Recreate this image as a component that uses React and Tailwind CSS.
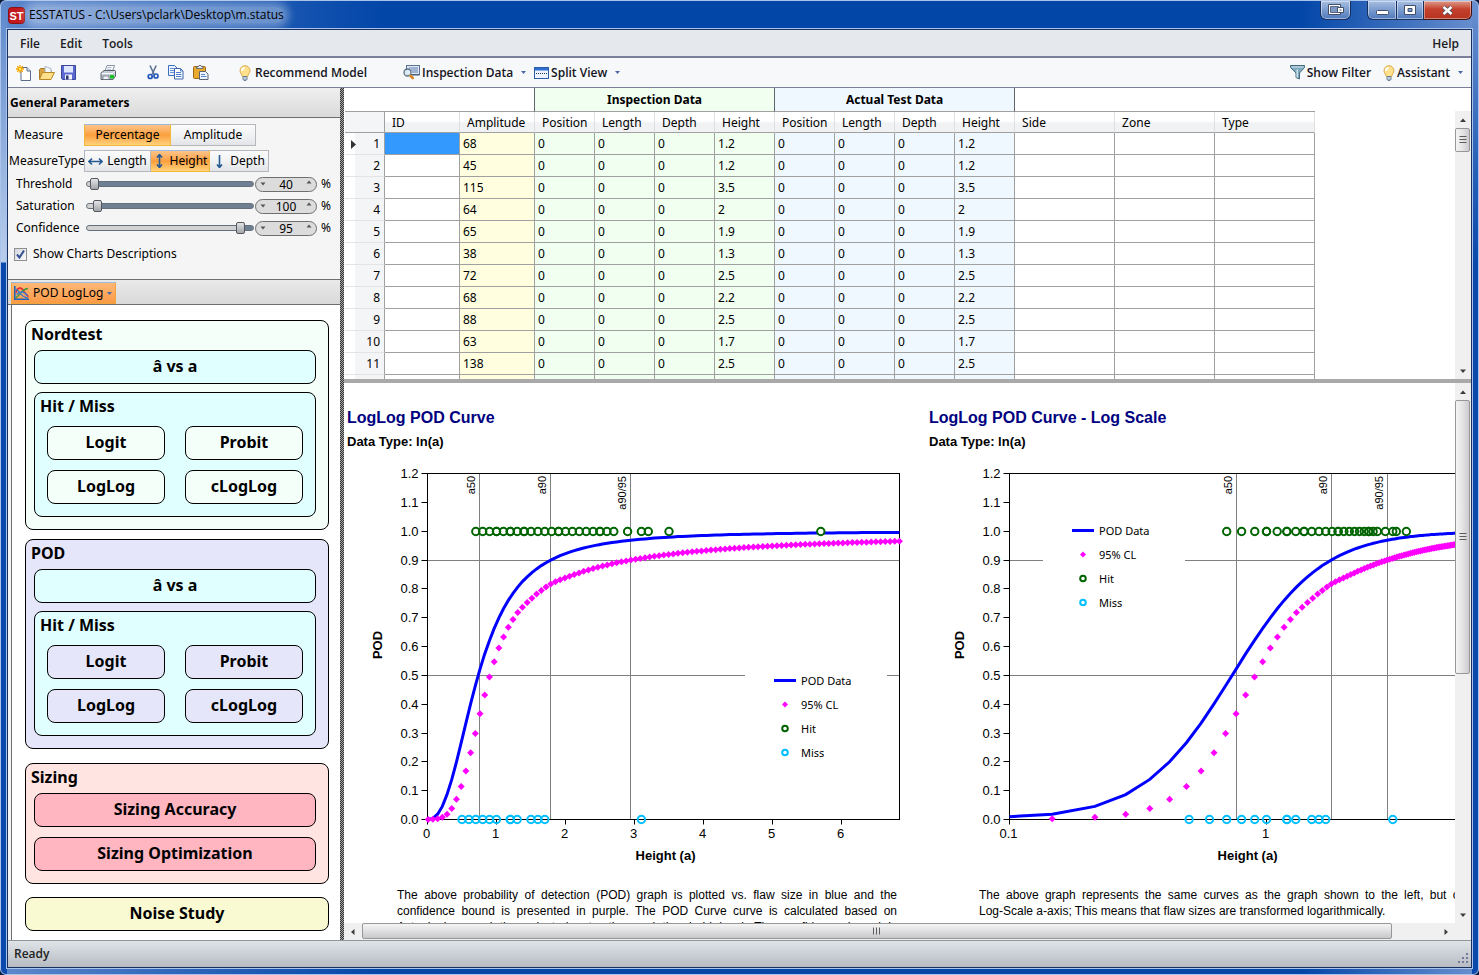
import { useState } from 'react';
import { twMerge } from 'tailwind-merge';

const ROWS = [
  ['68', '1.2'], ['45', '1.2'], ['115', '3.5'], ['64', '2'], ['65', '1.9'], ['38', '1.3'],
  ['72', '2.5'], ['68', '2.2'], ['88', '2.5'], ['63', '1.7'], ['138', '2.5'],
];

const COLUMNS = [
  'ID', 'Amplitude', 'Position', 'Length', 'Depth', 'Height',
  'Position', 'Length', 'Depth', 'Height', 'Side', 'Zone', 'Type',
];

const HITS = [
  0.7, 0.8, 0.9, 1, 1, 1.1, 1.2, 1.2, 1.3, 1.4, 1.4, 1.5, 1.6, 1.7, 1.8, 1.9, 1.9, 2, 2.1, 2.2,
  2.3, 2.4, 2.5, 2.5, 2.6, 2.7, 2.9, 3.1, 3.2, 3.5, 5.7,
];
const MISSES = [0.5, 0.6, 0.7, 0.8, 0.9, 1, 1.2, 1.2, 1.3, 1.5, 1.6, 1.7, 3.1];

// lower 95% bound, [step index, probability]
const BOUND = [
  [0, 0.0001], [1, 0.001], [2, 0.003], [3, 0.008], [4, 0.0185], [5, 0.038], [6, 0.0705], [7, 0.1146], [9, 0.2316],
  [11, 0.367], [13, 0.494], [15, 0.595], [17, 0.667], [19, 0.7177], [26, 0.817], [31, 0.8497],
  [43, 0.9], [58, 0.9316], [73, 0.949], [100, 0.9653],
];

const sizes = [...Array(101)].map((_, i) => 0.01 + i * 0.0683);
const pod = (a) => 1 / (1 + Math.pow(0.735 / a, 2.473));

function bound(i) {
  const k = Math.max(1, BOUND.findIndex(([n]) => n >= i));
  const [n0, p0] = BOUND[k - 1];
  const [n1, p1] = BOUND[k];
  const t = (Math.log(i + 0.15) - Math.log(n0 + 0.15)) / (Math.log(n1 + 0.15) - Math.log(n0 + 0.15));
  const l0 = Math.log(p0 / (1 - p0));
  const l1 = Math.log(p1 / (1 - p1));
  return 1 / (1 + Math.exp(-(l0 + (l1 - l0) * t)));
}

/* ---------- icons ---------- */

function NewIcon() {
  return (
    <svg width="16" height="16" viewBox="0 0 16 16">
      <path d="M5 2.5h6l3.5 3.5v9.5H5z" fill="#fff" stroke="#5b6b8c" />
      <path d="M11 2.5V6h3.500" fill="#dfe6f2" stroke="#5b6b8c" />
      <path d="M4 0v8M0 4h8M1.200 1.200l5.600 5.600M6.800 1.200L1.200 6.800" stroke="#f0a400" strokeWidth="1.300" />
      <circle cx="4" cy="4" r="1.700" fill="#ffe64a" stroke="#f5a800" strokeWidth="0.800" />
    </svg>
  );
}

function OpenIcon() {
  return (
    <svg width="17" height="16" viewBox="0 0 17 16">
      <path d="M1.500 14V4.500l1-1h4l1.500 1.500h5V14z" fill="#d9a441" stroke="#a87a25" />
      <path d="M7 8V1.500l6 2V8z" fill="#f4f7fb" stroke="#9aa7bb" strokeWidth="0.800" />
      <path d="M1.500 14.500L4.500 7.500h12l-3.500 7z" fill="#ffe08a" stroke="#b98728" />
    </svg>
  );
}

function SaveIcon() {
  return (
    <svg width="15" height="15" viewBox="0 0 15 15">
      <path d="M0.500 0.500h14v14h-13l-1-1z" fill="#5a68d0" stroke="#3a459e" />
      <rect x="3" y="1" width="9" height="6.500" fill="#dfe7fb" />
      <rect x="4" y="9.500" width="7" height="5" fill="#f2f4fa" />
      <rect x="5" y="10.500" width="2.500" height="4" fill="#2b3270" />
    </svg>
  );
}

function PrintIcon() {
  return (
    <svg width="17" height="16" viewBox="0 0 17 16">
      <path d="M5 6l2-5.500h7.500L12.500 6z" fill="#fff" stroke="#7d8796" strokeWidth="0.900" />
      <path d="M7.500 2.500h4M7 4.300h4" stroke="#8fa0bd" strokeWidth="0.700" />
      <path d="M1 8l3-2.500h11.500V11l-2.500 3.500H1z" fill="#c5ccd6" stroke="#59626f" />
      <path d="M1.500 8.500h11.500l2.500-3" fill="none" stroke="#f7f9fb" />
      <rect x="3" y="11" width="6" height="3.500" fill="#eef1f5" stroke="#59626f" strokeWidth="0.700" />
      <rect x="10" y="10" width="4" height="3.500" fill="#19c422" />
    </svg>
  );
}

function CutIcon() {
  return (
    <svg width="12" height="15" viewBox="0 0 12 15">
      <path d="M3 0.500l4.200 9M9.200 0.500L5 9.500" stroke="#5f7394" strokeWidth="1.600" />
      <circle cx="3.200" cy="11.500" r="2" fill="none" stroke="#2458b8" strokeWidth="1.700" />
      <circle cx="9" cy="11" r="2" fill="none" stroke="#2458b8" strokeWidth="1.700" />
    </svg>
  );
}

function CopyIcon() {
  return (
    <svg width="16" height="15" viewBox="0 0 16 15">
      <path d="M0.500 0.500h6l2.500 2.500v7.500H0.500z" fill="#eaf2ff" stroke="#3b6fbf" />
      <path d="M2 3.500h4M2 5.500h4M2 7.500h4" stroke="#6a94d6" />
      <path d="M6.500 3.500h6l2.500 2.500v8H6.500z" fill="#fff" stroke="#3b62b0" />
      <path d="M12.500 3.500V6H15M8 7.500h5M8 9.500h5.500M8 11.500h5.500" fill="none" stroke="#4c7dcc" />
    </svg>
  );
}

function PasteIcon() {
  return (
    <svg width="16" height="15" viewBox="0 0 16 15">
      <rect x="0.500" y="1.500" width="12" height="12" rx="1" fill="#e8a92c" stroke="#9a6a18" />
      <path d="M3.500 3.500V2h1.500L6 0.500h2L9 2h1v1.500z" fill="#e9edf3" stroke="#5d6675" strokeWidth="0.900" />
      <path d="M6.500 6.500h6l2.500 2.500v5.500H6.500z" fill="#eef4ff" stroke="#5a6373" />
      <path d="M8 9.500h4M8 11.500h5.500" stroke="#5a86cc" />
    </svg>
  );
}

function BulbIcon() {
  return (
    <svg width="12" height="16" viewBox="0 0 12 16">
      <path d="M6 0.700a5 5 0 0 0-5 5c0 2.500 2 3.500 2.500 6h5C9 9.200 11 8.200 11 5.700a5 5 0 0 0-5-5z" fill="#ffe08c" stroke="#d9a33c" strokeWidth="0.900" />
      <path d="M4.500 2a3.600 3.600 0 0 0-2.300 4.500c1.500-.4 3.500-2 3.800-4.500z" fill="#fffdf0" />
      <path d="M4 11.500h4v3l-1 1H5l-1-1z" fill="#9db4c6" stroke="#54708a" strokeWidth="0.800" />
      <path d="M4 13h4" stroke="#e4eef5" strokeWidth="0.700" />
    </svg>
  );
}

function InspectIcon() {
  return (
    <svg width="17" height="15" viewBox="0 0 17 15">
      <rect x="3.500" y="0.500" width="13" height="9" fill="#dfe8f5" stroke="#5d7292" />
      <path d="M6 3h9M8 5h7M9 7h6" stroke="#5f7fae" />
      <path d="M3.500 10h13" stroke="#3f5578" />
      <circle cx="4.500" cy="7.500" r="3.500" fill="#dff0fb" fillOpacity="0.900" stroke="#5b7184" strokeWidth="1.300" />
      <path d="M7.500 10.700l2.200 2.200" stroke="#d8892b" strokeWidth="2.800" strokeLinecap="round" />
    </svg>
  );
}

function SplitIcon() {
  return (
    <svg width="15" height="12" viewBox="0 0 15 12">
      <rect x="0.500" y="0.500" width="14" height="11" fill="#eef4ff" stroke="#2e5da8" />
      <rect x="1" y="1" width="13" height="2.500" fill="#2f6fd0" />
      <path d="M2 6.500h11" stroke="#24365e" strokeDasharray="1 1" />
    </svg>
  );
}

function FilterIcon() {
  return (
    <svg width="15" height="15" viewBox="0 0 15 15">
      <path d="M0.500 0.500h14v2L9.500 8v6l-3.500-1.500V8L0.500 2.500z" fill="#7fa9bd" stroke="#44697c" />
      <path d="M1.500 2h12" stroke="#c9dfe9" strokeWidth="1.200" />
      <path d="M7.200 4.500v8" stroke="#dcecf3" strokeWidth="1.300" />
    </svg>
  );
}

function CurvesIcon() {
  return (
    <svg width="15" height="14" viewBox="0 0 15 14">
      <path d="M0.800 0v13.200H15" fill="none" stroke="#2464b4" strokeWidth="1.600" />
      <path d="M2 6.500C4 1 7 1 9 4s3.500 6 5.500 6.500" fill="none" stroke="#e0262a" strokeWidth="1.500" />
      <path d="M2 11.500C5 11 7 3 14 2.500" fill="none" stroke="#2e9a3f" strokeWidth="1.400" />
      <path d="M2 3c3 2 5 8.500 12 9M2.500 8.500c4-4 8-3 11 1" fill="none" stroke="#3a7bd0" strokeWidth="1.400" />
    </svg>
  );
}

function Arrow({ dir }) {
  const paths = {
    both: 'M1 5.500h13M4 2.500L1 5.500l3 3M11 2.500l3 3-3 3',
    updown: 'M7.500 1v12M5 3.500l2.500-3 2.500 3M5 10.500l2.500 3 2.500-3',
    down: 'M7.500 1v12M5 10.500l2.500 3 2.500-3',
  };
  const tall = dir !== 'both';
  return (
    <svg width={tall ? 13 : 15} height={tall ? 14 : 11} viewBox={tall ? '1 0 13 14' : '0 0 15 11'}>
      <path d={paths[dir]} fill="none" stroke="#245a92" strokeWidth="1.600" />
    </svg>
  );
}

function Caret({ className }) {
  return (
    <svg width="5" height="3" viewBox="0 0 5 3" className={className}>
      <path d="M0 0h5L2.500 3z" fill="#4c68a8" />
    </svg>
  );
}

/* ---------- window frame ---------- */

function TitleBar() {
  const button = 'flex h-full items-center justify-center border border-t-0 border-[#16305f] bg-linear-to-b from-[#a9bfe0] via-[#7f9fd0] via-45% to-[#4f79bd] shadow-[inset_0_0_0_1px_rgba(255,255,255,0.45)]';
  return (
    <header className="flex h-7 shrink-0 items-start">
      <div className="flex h-full flex-1 items-center gap-1 pl-px">
        <svg width="17" height="17" viewBox="0 0 17 17">
          <rect x="0.500" y="0.500" width="16" height="16" rx="3" fill="#c2181c" stroke="#8c1013" />
          <text x="8.500" y="13" textAnchor="middle" fontFamily="Liberation Sans, sans-serif" fontWeight="700" fontSize="11" fill="#fff">ST</text>
        </svg>
        <h1 className="rounded-full bg-white/35 text-[12px] leading-4 text-black shadow-[0_0_8px_5px_rgba(255,255,255,0.35)]">
          ESSTATUS - C:\Users\pclark\Desktop\m.status
        </h1>
      </div>
      <div className="mr-4 flex h-[19px]">
        <button type="button" aria-label="Dock window" className={twMerge(button, 'w-[31px] rounded-b-md')}>
          <svg width="16" height="12" viewBox="0 0 16 12">
            <path d="M0.500 0.500h12v10H0.500z" fill="#fff" stroke="#414f6b" />
            <path d="M2.500 2.500h8v6h-8z" fill="#7d97c4" stroke="#414f6b" strokeWidth="0.800" />
            <path d="M9.500 3.500h6v5h-6z" fill="#fff" stroke="#414f6b" />
            <path d="M11.500 5.500h2v1h-2z" fill="#414f6b" />
          </svg>
        </button>
      </div>
      <div className="flex h-[19px]">
        <button type="button" aria-label="Minimize" className={twMerge(button, 'w-[30px] rounded-bl-md')}>
          <svg width="13" height="5" viewBox="0 0 13 5" className="mt-1"><rect x="0.500" y="0.500" width="12" height="4" rx="1" fill="#fff" stroke="#414f6b" /></svg>
        </button>
        <button type="button" aria-label="Maximize" className={twMerge(button, 'w-[27px] border-l-0')}>
          <svg width="12" height="10" viewBox="0 0 12 10">
            <path fillRule="evenodd" d="M0.500 0.500h11v9H0.500zM4 3.500v3h4v-3z" fill="#fff" stroke="#414f6b" />
          </svg>
        </button>
        <button type="button" aria-label="Close" className="flex h-full w-[48px] items-center justify-center rounded-br-md border border-t-0 border-l-0 border-[#3f1414] bg-linear-to-b from-[#dc9a8c] via-[#c4402c] via-45% to-[#b5341f] shadow-[inset_0_0_0_1px_rgba(255,255,255,0.4)]">
          <svg width="13" height="11" viewBox="0 0 13 11">
            <path d="M2.500 2l8 7M10.500 2l-8 7" stroke="#4d5267" strokeWidth="4" />
            <path d="M2.500 2l8 7M10.500 2l-8 7" stroke="#fff" strokeWidth="2.400" />
          </svg>
        </button>
      </div>
    </header>
  );
}

function MenuBar() {
  return (
    <nav className="flex h-7 shrink-0 items-center gap-5 border-b-2 border-[#7b7f9a] bg-[#e5e9ee] px-3 pt-0.5 text-[12px] font-semibold text-[#1b1b22]">
      <button type="button">File</button>
      <button type="button">Edit</button>
      <button type="button">Tools</button>
      <button type="button" className="ml-auto">Help</button>
    </nav>
  );
}

function ToolButton({ icon, children, caret, label, className }) {
  return (
    <button type="button" aria-label={label} className={twMerge('flex items-center gap-0.5 whitespace-nowrap', className)}>
      {icon}
      {children && <span>{children}</span>}
      {caret && <Caret className="ml-1.5" />}
    </button>
  );
}

function Toolbar() {
  return (
    <div className="flex h-[30px] shrink-0 items-center justify-between border-b border-[#7b7f9a] bg-[#f6f8fa] pr-2 pl-2 text-[12px] font-semibold text-[#15151c]">
      <div className="flex items-center">
        <div className="flex items-center gap-1.5">
          <ToolButton label="New" icon={<NewIcon />} />
          <ToolButton label="Open" icon={<OpenIcon />} />
          <ToolButton label="Save" icon={<SaveIcon />} />
        </div>
        <div className="ml-6"><ToolButton label="Print" icon={<PrintIcon />} /></div>
        <div className="ml-[30px] flex items-center gap-[9px]">
          <ToolButton label="Cut" icon={<CutIcon />} />
          <ToolButton label="Copy" icon={<CopyIcon />} />
          <ToolButton label="Paste" icon={<PasteIcon />} />
        </div>
        <div className="ml-[30px]"><ToolButton icon={<BulbIcon />} className="gap-1">Recommend Model</ToolButton></div>
        <div className="ml-9 flex items-center gap-2">
          <ToolButton caret icon={<InspectIcon />}>Inspection Data</ToolButton>
          <ToolButton caret icon={<SplitIcon />}>Split View</ToolButton>
        </div>
      </div>
      <div className="flex items-center gap-3">
        <ToolButton icon={<FilterIcon />}>Show Filter</ToolButton>
        <ToolButton caret icon={<BulbIcon />}>Assistant</ToolButton>
      </div>
    </div>
  );
}

/* ---------- left side ---------- */

function Segment({ active, className, children, onClick }) {
  return (
    <button
      type="button"
      onClick={onClick}
      className={twMerge(
        'flex h-[22px] items-center justify-center gap-1 border border-l-0 border-[#b4b8bd] bg-linear-to-b from-[#fbfbfc] via-[#f1f2f4] via-50% to-[#e2e4e7]',
        active && 'border-[#f0b93a] border-t-[#9db9dc] bg-linear-to-b from-[#fdc48a] via-[#fb9f3c] via-50% to-[#ffd27c]',
        className,
      )}
    >
      {children}
    </button>
  );
}

function SliderRow({ label, initial, max }) {
  const [value, setValue] = useState(initial);
  const fill = 3 + (value / max) * 94;
  return (
    <div className="flex h-[22px] items-center">
      <label htmlFor={label} className="w-[70px]">{label}</label>
      <input
        id={label}
        type="range"
        min="0"
        max={max}
        value={value}
        onChange={(e) => setValue(Number(e.target.value))}
        className="h-1.5 w-[168px] appearance-none rounded-full border border-[#66707c] [&::-webkit-slider-thumb]:h-3 [&::-webkit-slider-thumb]:w-[9px] [&::-webkit-slider-thumb]:appearance-none [&::-webkit-slider-thumb]:rounded-[2px] [&::-webkit-slider-thumb]:border [&::-webkit-slider-thumb]:border-[#55595f] [&::-webkit-slider-thumb]:bg-linear-to-b [&::-webkit-slider-thumb]:from-[#e3e4e6] [&::-webkit-slider-thumb]:to-[#a3a6ab]"
        style={{ background: `linear-gradient(to right, #d2d2d2 ${fill}%, #6f8092 ${fill}%)` }}
      />
      <div className="ml-px flex h-[15px] w-[62px] items-center rounded-full border border-[#6f6f6f] bg-[#dcdcdc] px-1">
        <button type="button" aria-label={`Decrease ${label}`} onClick={() => setValue(value - 1)}>
          <svg width="6" height="4" viewBox="0 0 6 4"><path d="M0.500 0.500h5L3 3.500z" fill="#555" /></svg>
        </button>
        <input
          aria-label={`${label} value`}
          value={value}
          onChange={(e) => setValue(Number(e.target.value) || 0)}
          className="w-0 flex-1 bg-transparent text-center leading-3 outline-none"
        />
        <button type="button" aria-label={`Increase ${label}`} onClick={() => setValue(value + 1)}>
          <svg width="6" height="4" viewBox="0 0 6 4" className="mb-1"><path d="M0.500 3.500h5L3 0.500z" fill="#555" /></svg>
        </button>
      </div>
      <span className="ml-1">%</span>
    </div>
  );
}

function Parameters() {
  const [measure, setMeasure] = useState('Percentage');
  const [type, setType] = useState('Height');
  const [descriptions, setDescriptions] = useState(true);
  return (
    <>
      <h2 className="flex h-[30px] shrink-0 items-center border-b border-[#6e6e6e] bg-linear-to-b from-[#efefef] to-[#dadada] pl-0.5 text-[12px] font-bold">
        General Parameters
      </h2>
      <div className="h-[162px] shrink-0 border-b border-[#6e6e6e] bg-[#f5f5f5] pt-1.5 text-[12px]">
        <div className="flex items-center">
          <span className="w-[76px] pl-1.5">Measure</span>
          <Segment className="w-[87px] border-l" active={measure === 'Percentage'} onClick={() => setMeasure('Percentage')}>Percentage</Segment>
          <Segment className="w-[85px]" active={measure === 'Amplitude'} onClick={() => setMeasure('Amplitude')}>Amplitude</Segment>
        </div>
        <div className="mt-1 flex items-center">
          <span className="w-[76px] pl-px whitespace-nowrap">MeasureType</span>
          <Segment className="w-[67px] border-l" active={type === 'Length'} onClick={() => setType('Length')}><Arrow dir="both" />Length</Segment>
          <Segment className="w-[59px]" active={type === 'Height'} onClick={() => setType('Height')}><Arrow dir="updown" />Height</Segment>
          <Segment className="w-[59px]" active={type === 'Depth'} onClick={() => setType('Depth')}><Arrow dir="down" />Depth</Segment>
        </div>
        <div className="mt-px pl-2">
          <SliderRow label="Threshold" initial={40} max={2500} />
          <SliderRow label="Saturation" initial={100} max={2500} />
          <SliderRow label="Confidence" initial={95} max={100} />
        </div>
        <label className="mt-1.5 flex items-center gap-1.5 pl-1.5">
          <input
            type="checkbox"
            checked={descriptions}
            onChange={(e) => setDescriptions(e.target.checked)}
            className="peer sr-only"
          />
          <span className="flex size-[13px] items-center justify-center border border-[#8e8f8f] bg-linear-to-br from-[#d3d8e0] to-[#fafbfc]">
            {descriptions && (
              <svg width="9" height="9" viewBox="0 0 9 9"><path d="M1 4.500l2.500 3L8 0.500" fill="none" stroke="#34508f" strokeWidth="2" /></svg>
            )}
          </span>
          Show Charts Descriptions
        </label>
      </div>
    </>
  );
}

function ModelButton({ className, children }) {
  return (
    <button type="button" className={twMerge('h-[34px] w-full rounded-lg border border-black pb-0.5', className)}>
      {children}
    </button>
  );
}

function ModelGroup({ title, tone, buttonTone }) {
  return (
    <section className={twMerge('rounded-lg border border-black px-2 pb-3', tone)}>
      <h3 className="-ml-1 flex h-[29px] items-center pb-1 pl-px">{title}</h3>
      <div className="pr-1">
        <ModelButton className="bg-[#e0ffff]">â vs a</ModelButton>
        <div className="mt-2 rounded-lg border border-black bg-[#e0ffff] px-3 pb-3">
          <h4 className="-ml-2 flex h-[33px] items-center pb-2 pl-px">Hit / Miss</h4>
          <div className="grid grid-cols-2 gap-x-5 gap-y-2.5">
            {['Logit', 'Probit', 'LogLog', 'cLogLog'].map((name) => (
              <ModelButton key={name} className={buttonTone}>{name}</ModelButton>
            ))}
          </div>
        </div>
      </div>
    </section>
  );
}

function Sidebar() {
  return (
    <aside className="flex w-[332px] shrink-0 flex-col bg-[#f5f5f5] text-black">
      <Parameters />
      <div className="flex h-[25px] shrink-0 items-end border-b border-[#6e6e6e] bg-linear-to-b from-[#e9e9e9] to-[#d9d9d9] pl-[3px]">
        <button type="button" className="flex h-[22px] w-[105px] items-center gap-1 border border-[#f0a63a] border-t-[#9db9dc] bg-linear-to-b from-[#fdb877] to-[#fb9a45] pl-0.5 text-[12px] whitespace-nowrap">
          <CurvesIcon />
          POD LogLog
          <Caret />
        </button>
      </div>
      <div className="ml-[3px] flex flex-1 flex-col border-l border-[#6e6e6e] bg-white pt-[15px] pr-[11px] pl-[13px] text-[16px] leading-5 font-bold">
        <ModelGroup title="Nordtest" tone="bg-[#f5fffa]" buttonTone="bg-[#f5fffa]" />
        <div className="h-[9px]" />
        <ModelGroup title="POD" tone="bg-[#e6e6fa]" buttonTone="bg-[#e6e6fa]" />
        <section className="mt-3.5 rounded-lg border border-black bg-[#ffe4e1] px-2 pb-3">
          <h3 className="-ml-1 flex h-[29px] items-center pb-1 pl-px">Sizing</h3>
          <div className="flex flex-col gap-2.5 pr-1">
            <ModelButton className="bg-[#ffb6c1]">Sizing Accuracy</ModelButton>
            <ModelButton className="bg-[#ffb6c1]">Sizing Optimization</ModelButton>
          </div>
        </section>
        <ModelButton className="mt-[13px] bg-[#fafad2]">Noise Study</ModelButton>
      </div>
    </aside>
  );
}

/* ---------- scroll bars ---------- */

function ScrollArrow({ points, label }) {
  return (
    <button type="button" aria-label={label} className="flex size-[17px] shrink-0 items-center justify-center">
      <svg width="8" height="8" viewBox="0 0 8 8"><path d={points} fill="#3c3c3c" /></svg>
    </button>
  );
}

function VScroll({ thumb }) {
  return (
    <div className="flex w-4 shrink-0 flex-col items-center bg-[#f0f0f0]">
      <ScrollArrow label="Scroll up" points="M1 6l3-3.500L7 6z" />
      <div className="flex min-h-0 w-full flex-1 flex-col">
        <div className={twMerge('flex w-[15px] items-center justify-center rounded-xs border border-[#979797] bg-linear-to-r from-[#f5f5f5] via-[#e4e4e6] via-50% to-[#cbcbcf]', thumb)}>
          <svg width="8" height="8" viewBox="0 0 8 8"><path d="M0.500 0.500h7M0.500 3.500h7M0.500 6.500h7" stroke="#5c5c5c" /></svg>
        </div>
      </div>
      <ScrollArrow label="Scroll down" points="M1 2.500h6L4 6z" />
    </div>
  );
}

function HScroll() {
  return (
    <div className="flex h-[17px] shrink-0 bg-[#f0f0f0]">
      <ScrollArrow label="Scroll left" points="M5.500 1v6L2 4z" />
      <div className="mr-[45px] ml-px flex h-4 flex-1 items-center justify-center rounded-xs border border-[#979797] bg-linear-to-b from-[#f5f5f5] via-[#e0e0e2] via-50% to-[#c8c8cc]">
        <svg width="8" height="8" viewBox="0 0 8 8"><path d="M0.500 0.500v7M3.500 0.500v7M6.500 0.500v7" stroke="#5c5c5c" /></svg>
      </div>
      <ScrollArrow label="Scroll right" points="M2.500 1v6L6 4z" />
      <div className="w-[17px]" />
    </div>
  );
}

/* ---------- data grid ---------- */

function DataGrid() {
  const cell = 'h-[22px] border-r border-b border-[#a0a0a0] pt-px pb-0 pl-[3px]';
  const tones = ['bg-white', 'bg-[#ffffe0]', 'bg-[#f0fff0]', 'bg-[#f0fff0]', 'bg-[#f0fff0]', 'bg-[#f0fff0]', 'bg-[#f0f8ff]', 'bg-[#f0f8ff]', 'bg-[#f0f8ff]', 'bg-[#f0f8ff]', 'bg-white', 'bg-white', 'bg-white'];
  return (
    <div className="flex h-[291px] shrink-0 bg-white">
      <div className="min-w-0 flex-1 overflow-hidden pl-px">
        <table className="w-[970px] table-fixed border-separate border-spacing-0 text-[12px] leading-4 text-black">
          <colgroup>
            <col className="w-[40px]" />
            <col className="w-[75px]" />
            <col className="w-[75px]" />
            <col span="8" className="w-[60px]" />
            <col span="3" className="w-[100px]" />
          </colgroup>
          <thead>
            <tr>
              <th colSpan="3" className="h-6 border-r border-b border-[#a0a0a0] border-r-[#5f6670] p-0" />
              <th colSpan="4" className="border-r border-b border-[#a0a0a0] border-r-[#5f6670] bg-[#f0fff0] p-0 font-bold">Inspection Data</th>
              <th colSpan="4" className="border-r border-b border-[#a0a0a0] border-r-[#5f6670] bg-[#f0f8ff] p-0 font-bold">Actual Test Data</th>
              <th colSpan="3" className="border-b border-[#a0a0a0] p-0" />
            </tr>
            <tr>
              <th className="h-[21px] border-r border-b border-[#a0a0a0] bg-[#f4f5f7] p-0" />
              {COLUMNS.map((name, i) => (
                <th key={i} className="border-r border-b border-r-[#dedfe1] border-b-[#a0a0a0] bg-linear-to-b from-white from-45% to-[#f1f2f4] to-55% pt-px pb-0 pl-[7px] text-left font-normal">
                  {name}
                </th>
              ))}
            </tr>
          </thead>
          <tbody>
            {ROWS.map(([amplitude, height], r) => (
              <tr key={r}>
                <th scope="row" className="border-r border-b border-[#a0a0a0] border-b-[#e3e4e6] bg-linear-to-r from-white from-25% to-[#f4f5f7] to-25% pt-px pr-1 pb-0 text-right font-normal">
                  <span className="flex items-center justify-end">
                    {r === 0 && <svg width="5" height="9" viewBox="0 0 5 9" className="mr-auto ml-1.5"><path d="M0 0l5 4.500L0 9z" fill="#333" /></svg>}
                    {r + 1}
                  </span>
                </th>
                {['', amplitude, '0', '0', '0', height, '0', '0', '0', height, '', '', ''].map((value, c) => (
                  <td key={c} className={twMerge(cell, tones[c], r === 0 && c === 0 && 'bg-[#3399ff]')}>{value}</td>
                ))}
              </tr>
            ))}
            <tr>
              <th className="border-r border-[#a0a0a0] bg-linear-to-r from-white from-25% to-[#f4f5f7] to-25% p-0" />
              {tones.map((tone, c) => <td key={c} className={twMerge(cell, tone)} />)}
            </tr>
          </tbody>
        </table>
      </div>
      <div className="flex pt-[23px]"><VScroll thumb="h-6" /></div>
    </div>
  );
}

/* ---------- charts ---------- */

const LEFT = 83.5;
const BASE = 359.5;
const yOf = (p) => BASE - p * 288.3;
const linearX = (a) => LEFT + a * 69;
const logX = (a) => LEFT + (Math.log10(a) + 1) * 257;

function PodChart({ id, scale, right, ticks, marks, legend }) {
  const x = scale;
  const snap = (v) => Math.round(v - 0.5) + 0.5;
  const curve = sizes.map((a) => `${x(a).toFixed(1)},${yOf(pod(a)).toFixed(1)}`).join(' ');
  return (
    <svg width="582" height="416" viewBox="0 0 582 416" className="block font-['Liberation_Sans',sans-serif]" role="img">
      <clipPath id={id}>
        <rect x={LEFT} y="0" width={right - LEFT + 1} height="366" />
      </clipPath>
      {marks.map(([label, px]) => (
        <g key={label}>
          <line x1={px} x2={px} y1="13.500" y2={BASE} stroke="#808080" />
          <text transform={`translate(${px - 5} 16) rotate(-90)`} textAnchor="end" fontSize="11">{label}</text>
        </g>
      ))}
      {[0.5, 0.9].map((p) => (
        <line key={p} x1={LEFT} x2={right} y1={snap(yOf(p))} y2={snap(yOf(p))} stroke="#808080" />
      ))}
      <rect x={legend.x} y={legend.y} width="142" height="104" fill="#fff" />
      <rect x={LEFT} y="13.500" width={right - LEFT} height={BASE - 13.5} fill="none" stroke="#000" />
      {[...Array(13)].map((_, i) => (
        <g key={i}>
          <line x1={LEFT - 6} x2={LEFT} y1={snap(yOf(i / 10))} y2={snap(yOf(i / 10))} stroke="#000" />
          <text x={LEFT - 9} y={snap(yOf(i / 10)) + 4} textAnchor="end" fontSize="13">{(i / 10).toFixed(1)}</text>
        </g>
      ))}
      {ticks.map((t) => (
        <g key={t}>
          <line x1={snap(x(t))} x2={snap(x(t))} y1={BASE} y2={BASE + 5} stroke="#000" />
          <text x={x(t) - 1} y="378" textAnchor="middle" fontSize="13">{t}</text>
        </g>
      ))}
      <polyline points={curve} fill="none" stroke="#0000ff" strokeWidth="3" clipPath={`url(#${id})`} />
      {sizes.map((a, i) => {
        const px = x(a);
        const py = yOf(bound(i));
        return px >= LEFT && <path key={i} d={`M${px - 3.5} ${py}l3.500-3.500 3.500 3.500-3.500 3.500z`} fill="#ff00ff" />;
      })}
      {MISSES.map((a, i) => <circle key={i} cx={x(a)} cy={BASE} r="3.700" fill="none" stroke="#00bfff" strokeWidth="2" />)}
      {HITS.map((a, i) => <circle key={i} cx={x(a)} cy={snap(yOf(1))} r="3" fill="#fff" />)}
      {HITS.map((a, i) => <circle key={i} cx={x(a)} cy={snap(yOf(1))} r="3.700" fill="none" stroke="#006400" strokeWidth="2" />)}
      <g transform={`translate(${legend.x} ${legend.y})`} fontSize="11" className="font-['Noto_Sans',sans-serif]">
        <path d="M29 12.500h22" stroke="#0000ff" strokeWidth="3" />
        <path d="M37 36.500l3-3 3 3-3 3z" fill="#ff00ff" />
        <circle cx="40" cy="60.500" r="2.800" fill="#fff" stroke="#006400" strokeWidth="2" />
        <circle cx="40" cy="84.500" r="2.800" fill="#fff" stroke="#00bfff" strokeWidth="2" />
        <text x="56" y="17">POD Data</text>
        <text x="56" y="41">95% CL</text>
        <text x="56" y="65">Hit</text>
        <text x="56" y="89">Miss</text>
      </g>
      <text transform="translate(38 185) rotate(-90)" textAnchor="middle" fontSize="13" fontWeight="700">POD</text>
      <text x="321.500" y="400" textAnchor="middle" fontSize="13" fontWeight="700">Height (a)</text>
    </svg>
  );
}

function ChartPanel({ title, chart, children }) {
  return (
    <section className="w-[582px] shrink-0">
      <h2 className="pt-[25px] pl-[3px] text-[16px] leading-5 font-bold text-[#000080]">{title}</h2>
      <p className="mt-1.5 mb-2.5 pl-[3px] text-[13px] leading-4 font-bold">Data Type: ln(a)</p>
      {chart}
      <div className="mt-[11px] ml-[53px] w-[500px] text-[12px] leading-4">{children}</div>
    </section>
  );
}

function Charts() {
  return (
    <div className="flex min-h-0 flex-1 flex-col bg-white font-['Liberation_Sans',sans-serif] text-black">
      <div className="flex min-h-0 flex-1">
        <div className="flex min-w-0 flex-1 overflow-hidden">
          <ChartPanel
            title="LogLog POD Curve"
            chart={(
              <PodChart
                id="clip-linear"
                scale={linearX}
                right={555.5}
                ticks={[0, 1, 2, 3, 4, 5, 6]}
                marks={[['a50', 135.5], ['a90', 206.5], ['a90/95', 286.5]]}
                legend={{ x: 401, y: 208 }}
              />
            )}
          >
            <p className="text-justify [text-align-last:justify]">
              The above probability of detection (POD) graph is plotted vs. flaw size in blue and the
              confidence bound is presented in purple. The POD Curve curve is calculated based on
              <br />
              Actual sizes and the selected extraction and threshold level. The confidence bound is
            </p>
          </ChartPanel>
          <ChartPanel
            title="LogLog POD Curve - Log Scale"
            chart={(
              <PodChart
                id="clip-log"
                scale={logX}
                right={555.5}
                ticks={[0.1, 1]}
                marks={[['a50', 310.5], ['a90', 405.5], ['a90/95', 461.5]]}
                legend={{ x: 117, y: 58 }}
              />
            )}
          >
            <p className="text-justify">
              The above graph represents the same curves as the graph shown to the left, but on a
              {' '}<span className="whitespace-nowrap">Log-Scale a-axis;</span> This means that flaw sizes are transformed logarithmically.
            </p>
          </ChartPanel>
        </div>
        <VScroll thumb="h-[274px]" />
      </div>
      <HScroll />
    </div>
  );
}

export default function App() {
  return (
    <div className="h-screen w-full overflow-hidden bg-[#0b1e40]">
      <div className="flex h-full flex-col rounded-md border border-[#a9c3ea] bg-[linear-gradient(to_bottom,#5d88cc,#b9cdec_261px,#0b4aac_262px),linear-gradient(to_bottom,#6a90cf,#2a62b8_160px,#0b4aac_262px),linear-gradient(to_right,#5d88cc,#2f66ba_12%,#0246a8_26%,#0246a8_88%,#6a90cf)] bg-size-[6px_100%,6px_100%,100%_100%] bg-position-[left_top,right_top,left_top] bg-no-repeat px-1.5 pb-1.5 font-['Open_Sans',sans-serif]">
        <TitleBar />
        <div className="flex min-h-0 flex-1 flex-col border border-[#17305f] outline outline-[#a9c3ea]">
          <MenuBar />
          <Toolbar />
          <main className="flex min-h-0 flex-1 font-['Noto_Sans',sans-serif]">
            <Sidebar />
            <div className="w-1 shrink-0 bg-[conic-gradient(#333_25%,#a5a5a5_0_50%,#333_0_75%,#a5a5a5_0)] bg-size-[2px_2px]" />
            <div className="flex min-w-0 flex-1 flex-col">
              <DataGrid />
              <div className="h-1 shrink-0 bg-[#a9a9a9]" />
              <Charts />
            </div>
          </main>
          <footer className="flex h-[27px] shrink-0 items-center justify-between border-t border-[#8f959c] bg-linear-to-b from-[#dfe4e9] to-[#b6bcc2] pr-0.5 pl-1.5 text-[12px] font-semibold text-[#222]">
            Ready
            <svg width="12" height="12" viewBox="0 0 12 12" className="mt-2">
              <path d="M9 1h2v2H9zM5 5h2v2H5zM9 5h2v2H9zM1 9h2v2H1zM5 9h2v2H5zM9 9h2v2H9z" fill="#77799a" />
            </svg>
          </footer>
        </div>
      </div>
    </div>
  );
}
